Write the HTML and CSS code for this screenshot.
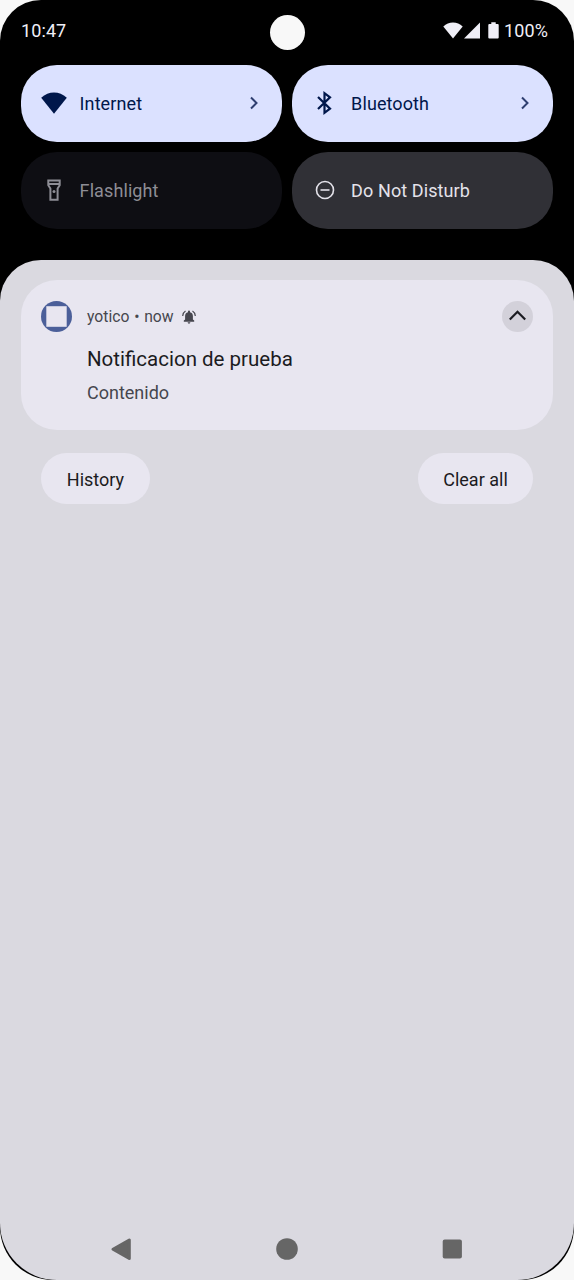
FILE: index.html
```html
<!DOCTYPE html>
<html lang="en">
<head>
<meta charset="utf-8">
<title>Notification shade</title>
<link rel="stylesheet" href="styles.css">
</head>
<body>
<div class="screen">
  <header class="status">
    <span class="time">10:47</span>
    <span class="camera"></span>
    <span class="indicators">
      <svg class="s-wifi" width="20" height="17" viewBox="0 0 20 17"><path d="M10 16.500 0.300 4.600Q4.500 .5 10 .5t9.700 4.100Z"/></svg>
      <svg class="s-cell" width="16" height="17" viewBox="0 0 16 17"><path d="M0 16.500 16 .5V16.500Z"/></svg>
      <svg class="s-batt" width="11" height="17" viewBox="0 0 11 17"><path d="M3.300 0.300h4.400v1.700H9.700q1 0 1 1V15.500q0 1-1 1h-8.400Q.3 16.500.3 15.500V3Q.3 2 1.300 2H3.300Z"/></svg>
      <span class="percent">100%</span>
    </span>
  </header>
  <section class="tiles">
    <div class="tile on">
      <svg class="icon" width="28" height="28" viewBox="0 0 28 28"><path fill="currentColor" d="M14 24.700 1.200 8.700Q7 3.500 14 3.500t12.800 5.200Z"/></svg>
      <span class="label">Internet</span>
      <svg class="chevron" width="10" height="14" viewBox="0 0 10 14"><path d="m2 1.500 5.500 5.500L2 12.500"/></svg>
    </div>
    <div class="tile on">
      <svg class="icon" width="28" height="28" viewBox="0 0 28 28"><path class="line bt" d="m7 8 12 11.600-5.500 4.200V4.200L19 8.400 7 20"/></svg>
      <span class="label">Bluetooth</span>
      <svg class="chevron" width="10" height="14" viewBox="0 0 10 14"><path d="m2 1.500 5.500 5.500L2 12.500"/></svg>
    </div>
    <div class="tile disabled">
      <svg class="icon" width="28" height="28" viewBox="0 0 28 28"><path class="line" d="M8.300 4.400h11.400v4.800L17.600 12.500v11.200h-7.200V12.500L8.300 9.200ZM8.300 8h11.400"/><circle cx="14" cy="15.500" r="1.500" fill="currentColor"/></svg>
      <span class="label">Flashlight</span>
    </div>
    <div class="tile off">
      <svg class="icon" width="28" height="28" viewBox="0 0 28 28"><circle class="line thin" cx="14" cy="14" r="8.500"/><path class="line thin" d="M9.500 14h9"/></svg>
      <span class="label">Do Not Disturb</span>
    </div>
  </section>
  <main class="shade">
    <article class="card">
      <svg class="app" width="31" height="31" viewBox="0 0 31 31"><circle cx="15.500" cy="15.500" r="15.500" fill="#4b5f99"/><path fill="#e8e6f0" d="M5.300 5.200h20.400v20.600H5.300Z"/></svg>
      <div class="body">
        <div class="meta"><span class="name">yotico</span><span class="dot">•</span><span class="when">now</span>
          <svg class="bell" width="14" height="14" viewBox="0 0 14 14"><path fill="currentColor" d="M1.800 11.700v-1.100l1.300-1.100V6q0-2.900 2.900-3.700v-.8q0-.9 1-.9t1 .9v.8q2.900.8 2.900 3.700v3.500l1.300 1.100v1.100ZM5.600 12.300h2.800Q8.300 13.700 7 13.700t-1.400-1.400Z"/><path fill="none" stroke="currentColor" stroke-width="1.200" d="M3.500 1Q.9 2.600.7 6M10.500 1Q13.100 2.600 13.300 6"/></svg>
        </div>
        <h1 class="title">Notificacion de prueba</h1>
        <p class="text">Contenido</p>
      </div>
      <svg class="collapse" width="31" height="31" viewBox="0 0 31 31"><circle cx="15.500" cy="15.500" r="15.500" fill="#d3d1da"/><path d="m7.800 18.500 7.700-7.700 7.700 7.700"/></svg>
    </article>
    <div class="actions">
      <button class="pill history">History</button>
      <button class="pill clear">Clear all</button>
    </div>
    <nav class="nav">
      <svg width="24" height="24" viewBox="0 0 24 24"><path stroke="#666" stroke-width="3" stroke-linejoin="round" d="M4 12.200 20.300 3v18.500Z"/></svg>
      <svg width="24" height="24" viewBox="0 0 24 24"><circle cx="12" cy="12" r="10.800"/></svg>
      <svg width="24" height="24" viewBox="0 0 24 24"><rect x="2.700" y="2.400" width="19.200" height="19.200" rx="2"/></svg>
    </nav>
  </main>
</div>
</body>
</html>
```

FILE: styles.css
```css
* { box-sizing: border-box; }
body { margin: 0; background: #f8f8f8; font-family: Roboto, "Liberation Sans", sans-serif; font-size: 18px; }
svg { display: block; flex: none; }
.screen { height: 1280px; background: #000; border-radius: 41px 41px 53px 53px; overflow: hidden; display: flex; flex-direction: column; }
.status { height: 65px; padding: 0 26px 0 21px; display: grid; grid-template-columns: 1fr 35px 1fr; flex: none; color: #f0eff7; }
.time { padding-top: 20px; line-height: 22px; letter-spacing: .1px; }
.camera { width: 35px; height: 35px; margin: 15px 0 0 2.500px; border-radius: 50%; background: #f8f8f8; }
.indicators { display: flex; padding-top: 20px; justify-content: flex-end; line-height: 22px; }
.indicators svg { fill: #f0eff7; margin-top: 2px; }
.s-cell { margin-left: 1px; }
.s-batt { margin-left: 8px; }
.percent { margin-left: 5px; letter-spacing: .1px; }
.tiles { display: grid; grid-template-columns: 261px 261px; grid-auto-rows: 76.500px; gap: 10.500px; padding: 0 20.600px; flex: none; }
.tile { display: flex; align-items: center; border-radius: 36px; padding: 0 23px 0 19px; }
.on { background: #dbe1ff; color: #00174b; }
.disabled { background: #0e0e13; color: #8d8d95; }
.off { background: #303036; color: #e4e2ea; }
.label { margin-left: 12px; padding-top: 2px; line-height: 22px; white-space: nowrap; letter-spacing: .1px; }
.line { fill: none; stroke: currentColor; stroke-width: 2; }
.thin { stroke-width: 1.600; }
.bt { stroke-width: 2.200; }
.chevron { margin-left: auto; fill: none; stroke: #2f3f70; stroke-width: 2; }
.shade { margin-top: 31.500px; flex: 1; background: #dad9e0; border-radius: 41px 41px 57px 57px; padding: 20px 21px 0; display: flex; flex-direction: column; }
.card { height: 150px; background: #e8e6f0; border-radius: 36px; display: flex; padding: 21px 20px 0; flex: none; }
.body { flex: 1; margin-left: 15px; }
.meta { display: flex; align-items: center; height: 31px; font-size: 15.700px; color: #46464e; }
.dot { margin-left: 5px; }
.when { margin-left: 4.500px; }
.bell { margin-left: 8px; }
.title { margin: 14px 0 0; font-size: 20.500px; font-weight: 400; line-height: 26px; color: #1b1b21; }
.text { margin: 10px 0 0; line-height: 22px; color: #46464e; }
.collapse path { fill: none; stroke: #1b1b21; stroke-width: 2.200; }
.actions { display: flex; justify-content: space-between; padding: 23px 20px 0; }
.pill { height: 51px; border: 0; padding: 1px 0 0; border-radius: 26px; background: #e8e6f0; color: #1b1b21; font: inherit; }
.history { width: 109px; }
.clear { width: 115px; }
.nav { display: flex; justify-content: space-between; margin-top: auto; padding: 0 89px 19px 88px; fill: #666; }
```
